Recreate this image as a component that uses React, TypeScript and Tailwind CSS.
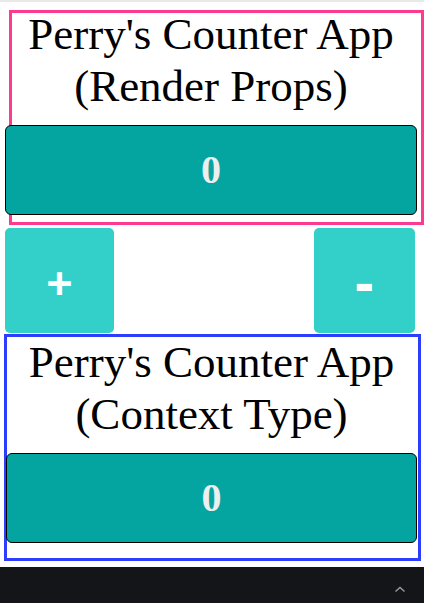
const serif = { fontFamily: '"Liberation Serif", "Times New Roman", serif' };

function CountDisplay({ value, className }: { value: number; className: string }) {
  return (
    <div
      className={`h-[90px] flex items-center justify-center bg-[#04a5a0] border border-black rounded-[6px] text-[40px] font-bold text-[#eeeeee] ${className}`}
    >
      {value}
    </div>
  );
}

function Title({ children }: { children: React.ReactNode }) {
  return <h1 className="text-[45px] leading-[52px] text-center text-black font-normal">{children}</h1>;
}

export default function App() {
  const count = 0;

  return (
    <div className="w-[424px] h-[603px] flex flex-col bg-white overflow-hidden" style={serif}>
      <div className="h-[2px] bg-[#e9e9e9]" />

      {/* render props version */}
      <div className="mt-[8px] ml-[9px] border-[3px] border-[#fc3a90] pb-[7px]">
        <div className="-ml-[7px] w-[412px] -mt-[5px]">
          <Title>
            Perry's Counter App
            <br />
            (Render Props)
          </Title>
          <CountDisplay value={count} className="mt-[13px]" />
        </div>
      </div>

      <div className="mt-[3px] flex h-[105px]" style={{ fontFamily: '"Liberation Sans", Arial, sans-serif' }}>
        <button className="ml-[5px] w-[109px] bg-[#33cfc9] rounded-[5px] text-white font-bold text-[45px] pt-[6px] flex items-center justify-center">
          +
        </button>
        <button className="ml-auto mr-[9px] w-[101px] bg-[#33cfc9] rounded-[5px] text-white font-bold text-[60px] pt-[4px] flex items-center justify-center">
          -
        </button>
      </div>

      {/* context type version */}
      <div className="mt-[1px] ml-[4px] w-[417px] border-[3px] border-[#2d3dfd] pb-[15px]">
        <div className="-ml-[1px] w-[411px] -mt-[1px]">
          <Title>
            Perry's Counter App
            <br />
            (Context Type)
          </Title>
          <CountDisplay value={count} className="mt-[13px]" />
        </div>
      </div>

      <div className="mt-[6px] flex-1 bg-[#141518] flex items-center justify-end pr-[18px] pt-[8px]">
        <svg width="12" height="7" viewBox="0 0 12 7" fill="none">
          <path d="M1.5 5.5 L6 1.5 L10.5 5.5" stroke="#9a9b9d" strokeWidth="1.4" />
        </svg>
      </div>
    </div>
  );
}
